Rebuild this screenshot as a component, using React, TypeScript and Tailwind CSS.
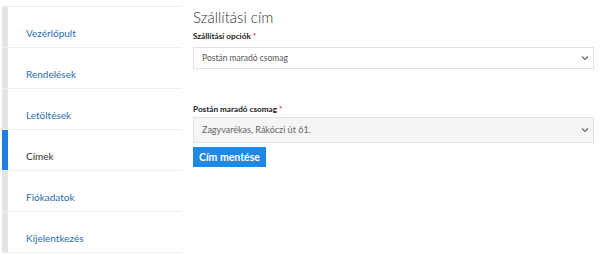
import React from "react";

const items = [
  { label: "Vezérlőpult", active: false },
  { label: "Rendelések", active: false },
  { label: "Letöltések", active: false },
  { label: "Címek", active: true },
  { label: "Fiókadatok", active: false },
  { label: "Kijelentkezés", active: false },
];

function Chevron() {
  return (
    <svg width="8" height="6" viewBox="0 0 8 6" className="shrink-0">
      <path d="M1 1.5 L4 4.5 L7 1.5" fill="none" stroke="#666" strokeWidth="1.1" />
    </svg>
  );
}

export default function App() {
  return (
    <div
      className="w-[600px] h-[255px] bg-white flex overflow-hidden"
      style={{ fontFamily: 'Lato, "Open Sans", "Liberation Sans", sans-serif' }}
    >
      <div className="w-[182px] pl-[2px] pt-[6px] shrink-0">
        <div className="border-t border-[#eeeeee]">
          {items.map((it) => (
            <div key={it.label} className="h-[41px] flex border-b border-[#eeeeee]">
              <div className={it.active ? "w-[6px] bg-[#1e7fe0]" : "w-[6px] bg-[#e4e4e4]"} />
              <div
                className={
                  it.active
                    ? "flex-1 pl-[18px] pt-[19px] text-[10px] leading-[14px] text-[#333333]"
                    : "flex-1 pl-[18px] pt-[19px] text-[10px] leading-[14px] text-[#2b6cb0]"
                }
              >
                {it.label}
              </div>
            </div>
          ))}
        </div>
      </div>
      <div className="flex-1 pl-[11px] pr-[6px] pt-[7px]">
        <h2 className="text-[15px] leading-[20px] font-light text-[#333333]">Szállítási cím</h2>
        <div className="mt-[3px] text-[8.2px] leading-[12px] font-bold text-[#222222]">
          Szállítási opciók <span className="text-[#e53935]">*</span>
        </div>
        <div className="mt-[5px] h-[22px] border border-[#e2e2e2] bg-white flex items-center justify-between pl-[8px] pr-[4px]">
          <span className="text-[8.5px] text-[#555555]">Postán maradó csomag</span>
          <Chevron />
        </div>
        <div className="mt-[34px] text-[8.2px] leading-[12px] font-bold text-[#222222]">
          Postán maradó csomag <span className="text-[#e53935]">*</span>
        </div>
        <div className="mt-[2px] h-[26px] border border-[#e2e2e2] bg-[#f5f5f5] flex items-center justify-between pl-[8px] pr-[4px]">
          <span className="text-[9px] text-[#666666]">Zagyvarékas, Rákóczi út 61.</span>
          <Chevron />
        </div>
        <button className="mt-[4px] h-[20px] px-[6px] bg-[#1e88e5] text-white text-[10.5px] font-bold leading-[20px]">
          Cím mentése
        </button>
      </div>
    </div>
  );
}
